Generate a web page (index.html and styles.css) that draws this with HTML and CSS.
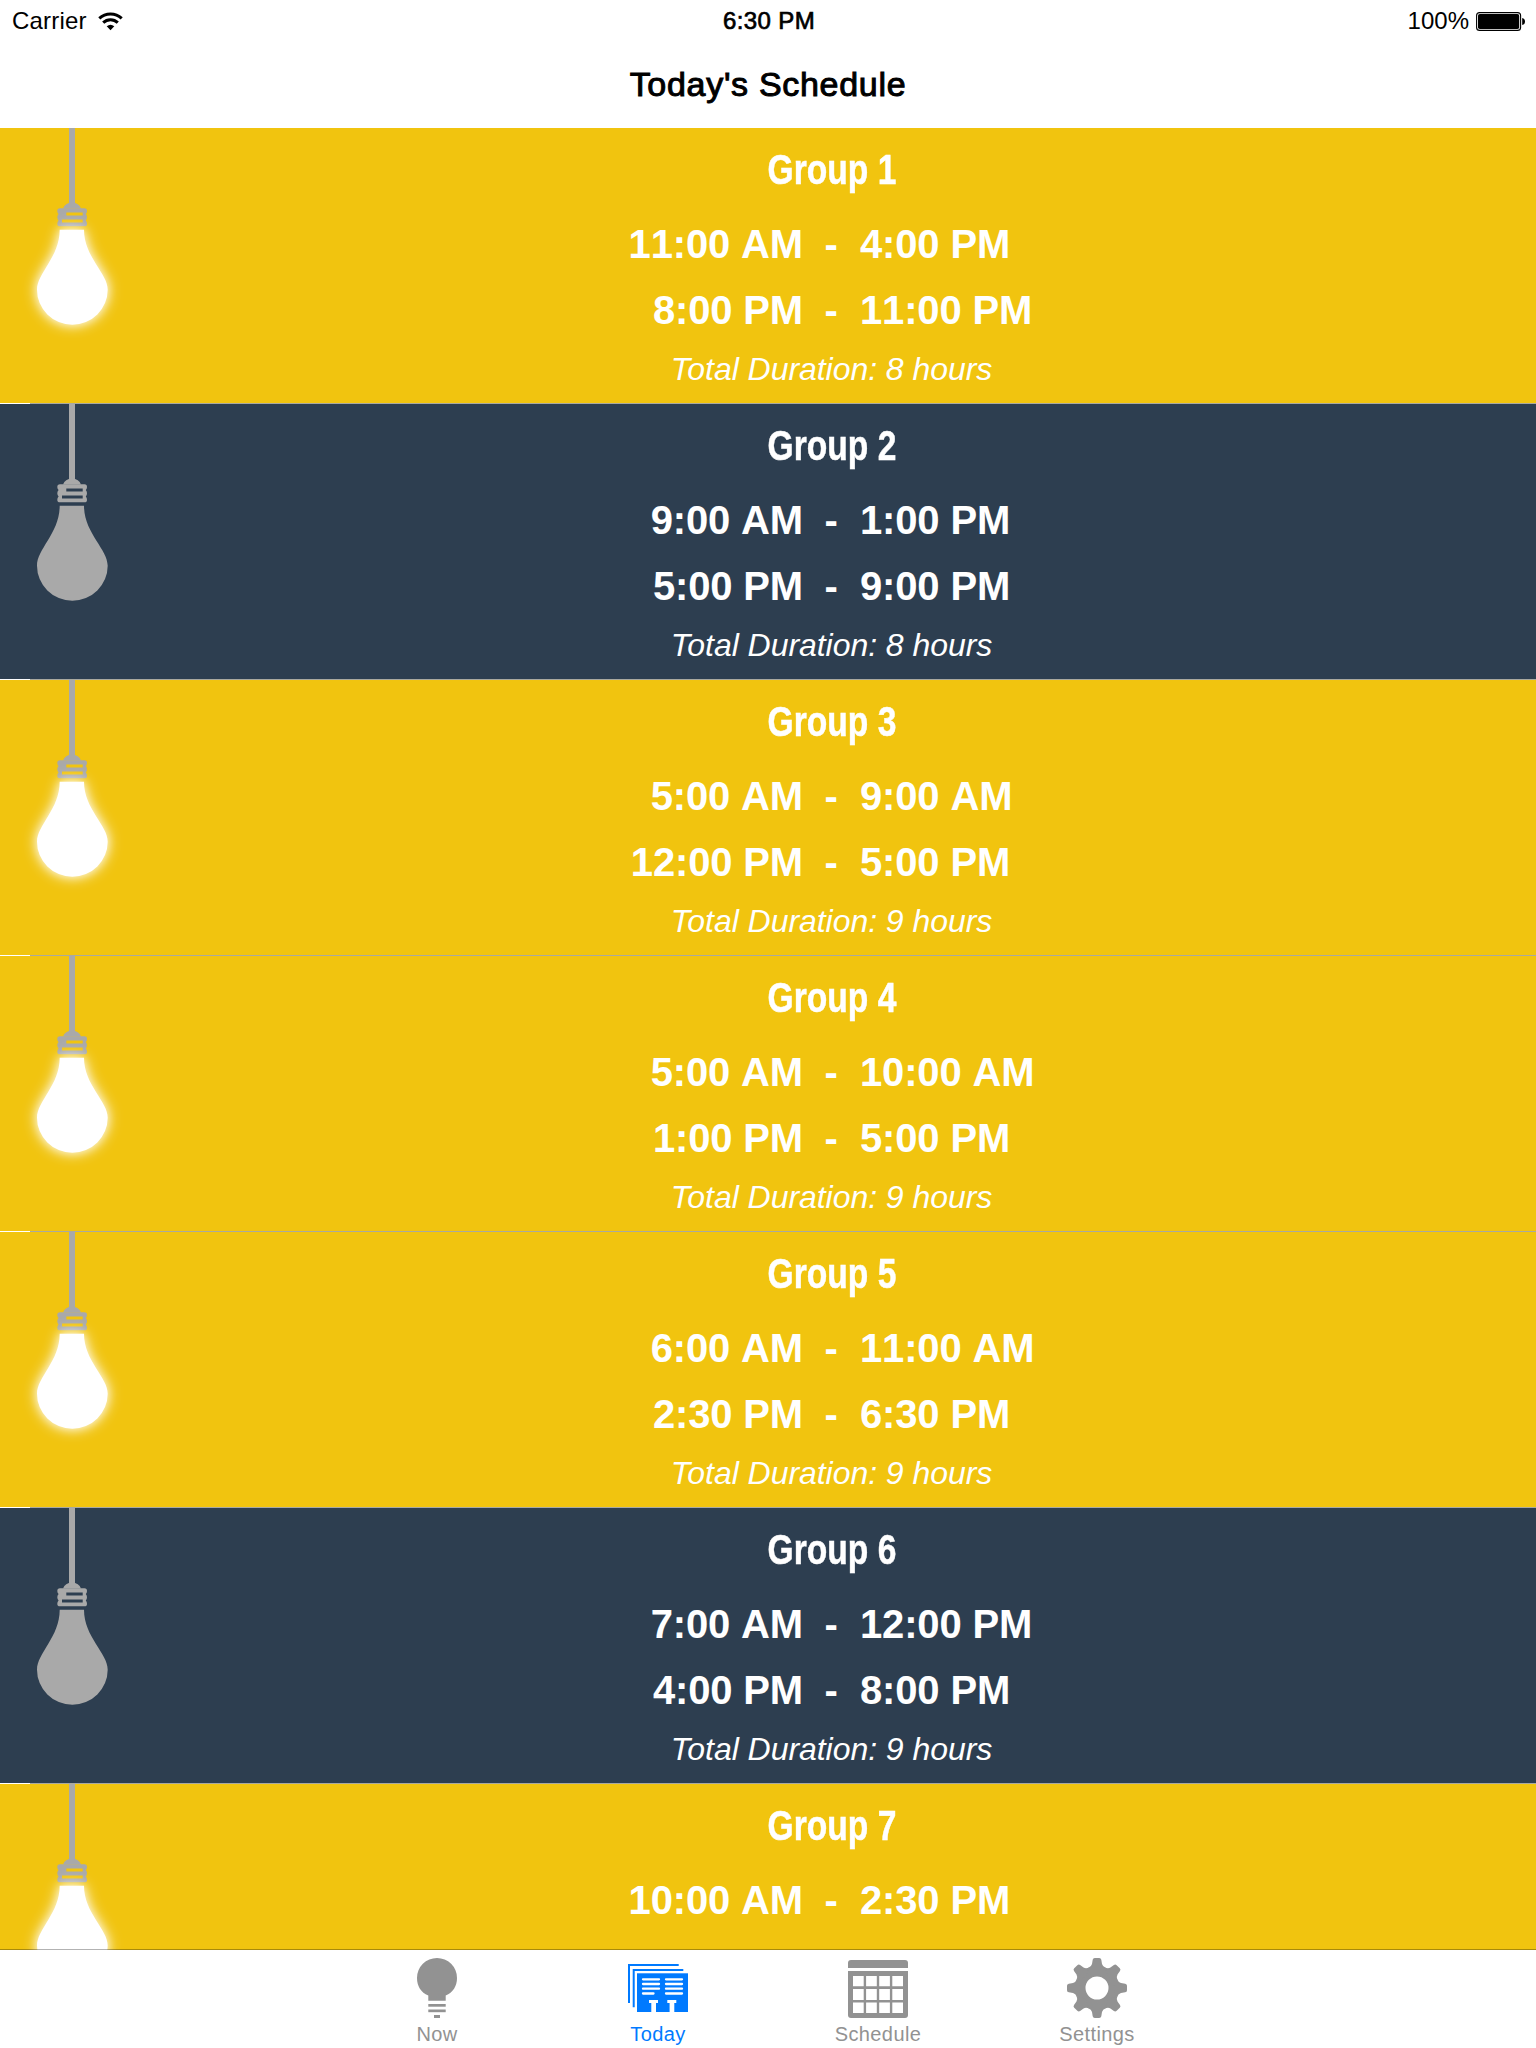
FILE: index.html
```html
<!DOCTYPE html>
<html lang="en">
  <head>
    <meta charset="utf-8" />
    <title>Today's Schedule</title>
    <meta name="viewport" content="width=device-width, initial-scale=1.0" />
    <link rel="stylesheet" href="styles.css">
  </head>
  <body>
    <!-- shared bulb drawing -->
    <svg class="defs" width="0" height="0">
      <g id="socket">
        <rect x="69" y="0" width="6" height="77" />
        <path d="M63 80.5 Q65 74.7 72 74.7 T81 80.5 Z" />
        <path
          fill-rule="evenodd"
          d="M60 80.3 H84.500 Q87 80.300 87 83 Q87 85 85.800 86 Q87 87.200 87 89.300 Q87 91.300 85.800 92.500 Q87 93.700 87 95.700 Q87 98.300 84.500 98.300 H60 Q57.300 98.300 57.300 95.700 Q57.300 93.700 58.600 92.500 Q57.300 91.300 57.300 89.300 Q57.300 87.200 58.600 86 Q57.300 85 57.300 83 Q57.300 80.300 60 80.300 Z M66.300 84.500 V87.500 H82.700 V84.500 Z M62 91.500 V94.500 H82.700 V91.500 Z"
        />
      </g>
      <path
        id="glass"
        d="M59.700 101.700 H84 C84 129 107.700 145 107.700 161.700 A35.350 35 0 0 1 37 161.700 C37 145 59.700 129 59.700 101.700 Z"
      />
    </svg>

    <header class="header">
      <div class="statusBar">
        <div class="statusLeft">
          <span>Carrier</span>
          <svg width="25" height="19" viewBox="0 0 25 19">
            <g fill="none" stroke="#000" stroke-width="3">
              <path d="M1.300 6.400 A16.200 16.200 0 0 1 23.700 6.400" />
              <path d="M5.200 10.700 A10.500 10.500 0 0 1 19.800 10.700" />
            </g>
            <path d="M8.700 14.300 Q12.500 11 16.300 14.300 L12.500 18.300 Z" />
          </svg>
        </div>
        <div class="statusTime">6:30 PM</div>
        <div class="statusRight">
          <span>100%</span>
          <svg width="50" height="19" viewBox="0 0 50 19">
            <rect x="0.600" y="0.600" width="44" height="17.800" rx="3" fill="none" stroke="#000" stroke-width="1.100" />
            <rect x="2" y="2" width="41.200" height="15" rx="1.800" />
            <path d="M46.200 6 Q49 6.500 49 9.500 T46.200 13 Z" />
          </svg>
        </div>
      </div>
      <h1 class="title">Today's Schedule</h1>
    </header>

    <main class="list">
      <section class="group on">
        <svg class="bulb"><use href="#socket" /><use class="glass" href="#glass" /></svg>
        <div class="info">
          <h2 class="name">Group 1</h2>
          <div class="times">
            <span>11:00 AM</span><span>-</span><span>4:00 PM</span>
            <span>8:00 PM</span><span>-</span><span>11:00 PM</span>
          </div>
          <p class="duration">Total Duration: 8 hours</p>
        </div>
      </section>
      <section class="group">
        <svg class="bulb"><use href="#socket" /><use class="glass" href="#glass" /></svg>
        <div class="info">
          <h2 class="name">Group 2</h2>
          <div class="times">
            <span>9:00 AM</span><span>-</span><span>1:00 PM</span>
            <span>5:00 PM</span><span>-</span><span>9:00 PM</span>
          </div>
          <p class="duration">Total Duration: 8 hours</p>
        </div>
      </section>
      <section class="group on">
        <svg class="bulb"><use href="#socket" /><use class="glass" href="#glass" /></svg>
        <div class="info">
          <h2 class="name">Group 3</h2>
          <div class="times">
            <span>5:00 AM</span><span>-</span><span>9:00 AM</span>
            <span>12:00 PM</span><span>-</span><span>5:00 PM</span>
          </div>
          <p class="duration">Total Duration: 9 hours</p>
        </div>
      </section>
      <section class="group on">
        <svg class="bulb"><use href="#socket" /><use class="glass" href="#glass" /></svg>
        <div class="info">
          <h2 class="name">Group 4</h2>
          <div class="times">
            <span>5:00 AM</span><span>-</span><span>10:00 AM</span>
            <span>1:00 PM</span><span>-</span><span>5:00 PM</span>
          </div>
          <p class="duration">Total Duration: 9 hours</p>
        </div>
      </section>
      <section class="group on">
        <svg class="bulb"><use href="#socket" /><use class="glass" href="#glass" /></svg>
        <div class="info">
          <h2 class="name">Group 5</h2>
          <div class="times">
            <span>6:00 AM</span><span>-</span><span>11:00 AM</span>
            <span>2:30 PM</span><span>-</span><span>6:30 PM</span>
          </div>
          <p class="duration">Total Duration: 9 hours</p>
        </div>
      </section>
      <section class="group">
        <svg class="bulb"><use href="#socket" /><use class="glass" href="#glass" /></svg>
        <div class="info">
          <h2 class="name">Group 6</h2>
          <div class="times">
            <span>7:00 AM</span><span>-</span><span>12:00 PM</span>
            <span>4:00 PM</span><span>-</span><span>8:00 PM</span>
          </div>
          <p class="duration">Total Duration: 9 hours</p>
        </div>
      </section>
      <section class="group on">
        <svg class="bulb"><use href="#socket" /><use class="glass" href="#glass" /></svg>
        <div class="info">
          <h2 class="name">Group 7</h2>
          <div class="times">
            <span>10:00 AM</span><span>-</span><span>2:30 PM</span>
          </div>
        </div>
      </section>
    </main>

    <nav class="tabBar">
      <a class="tab">
        <svg width="60" height="60" viewBox="0 0 60 60" fill="currentColor">
          <path d="M21.300 42.700 V37.500 C14 34.500 10 28 10 20 A20 20 0 0 1 50 20 C50 28 46 34.500 38.700 37.500 V42.700 Z" />
          <rect x="21.300" y="46" width="17.400" height="2.700" />
          <rect x="21.300" y="51.500" width="17.400" height="2.700" />
          <rect x="27" y="57" width="6" height="3" />
        </svg>
        <span>Now</span>
      </a>
      <a class="tab shifted active">
        <svg width="60" height="60" viewBox="0 0 60 60" fill="currentColor">
          <path d="M0 6 H50.700 V8 H2 V45 H0 Z" />
          <path d="M4.700 11 H55.300 V13 H6.700 V49.300 H4.700 Z" />
          <rect x="9" y="15.300" width="51" height="38.700" />
          <g stroke="#fff" stroke-width="2.300" stroke-linecap="round">
            <path d="M15 21.300 H31 M15 26 H31 M15 30.700 H31 M15 35.500 H25.500" />
            <path d="M38 21.300 H54 M38 26 H54 M38 30.700 H54 M38 35.500 H54" />
          </g>
          <g fill="#fff">
            <path d="M21 42 H30 V45 H28 V54 H23.300 V45 H21 Z" />
            <path d="M39.300 42 H48.300 V45 H46.300 V54 H41.600 V45 H39.300 Z" />
          </g>
        </svg>
        <span>Today</span>
      </a>
      <a class="tab shifted">
        <svg width="60" height="60" viewBox="0 0 60 60" fill="currentColor">
          <path d="M0 10 V5 Q0 2 3 2 H57 Q60 2 60 5 V10 Z" />
          <path d="M0 13 H60 V57 Q60 60 57 60 H3 Q0 60 0 57 Z" />
          <g fill="#fff">
            <path d="M5 18 h10.700 v10.300 h-10.700z M18.100 18 h10.700 v10.300 h-10.700z M31.200 18 h10.700 v10.300 h-10.700z M44.300 18 h10.700 v10.300 h-10.700z" />
            <path d="M5 31 h10.700 v11 h-10.700z M18.100 31 h10.700 v11 h-10.700z M31.200 31 h10.700 v11 h-10.700z M44.300 31 h10.700 v11 h-10.700z" />
            <path d="M5 44.500 h10.700 v10.500 h-10.700z M18.100 44.500 h10.700 v10.500 h-10.700z M31.200 44.500 h10.700 v10.500 h-10.700z M44.300 44.500 h10.700 v10.500 h-10.700z" />
          </g>
        </svg>
        <span>Schedule</span>
      </a>
      <a class="tab">
        <svg width="60" height="60" viewBox="0 0 60 60" fill="currentColor">
          <defs>
            <path id="tooth" d="M25.700 1.800 Q26 0 27.800 0 H32.200 Q34 0 34.300 1.800 L35 6 Q35.500 8.500 39 10 L30 14 L21 10 Q24.500 8.500 25 6 Z" />
          </defs>
          <circle cx="30" cy="30" r="16.500" fill="none" stroke="currentColor" stroke-width="10" />
          <use href="#tooth" />
          <use href="#tooth" transform="rotate(45 30 30)" />
          <use href="#tooth" transform="rotate(90 30 30)" />
          <use href="#tooth" transform="rotate(135 30 30)" />
          <use href="#tooth" transform="rotate(180 30 30)" />
          <use href="#tooth" transform="rotate(225 30 30)" />
          <use href="#tooth" transform="rotate(270 30 30)" />
          <use href="#tooth" transform="rotate(315 30 30)" />
        </svg>
        <span>Settings</span>
      </a>
    </nav>
  </body>
</html>
```
FILE: styles.css
```css
* {
  box-sizing: border-box;
}
body {
  margin: 0;
  width: 1536px;
  height: 2048px;
  overflow: hidden;
  display: flex;
  flex-direction: column;
  background: #fff;
  font-family: "Liberation Sans", Arial, Helvetica, sans-serif;
  color: #000;
}
.defs {
  position: absolute;
}
.header {
  height: 128px;
  flex: none;
}
.statusBar {
  display: grid;
  grid-template-columns: 1fr auto 1fr;
  align-items: center;
  height: 42px;
  padding: 0 10px 0 12px;
  font-size: 24px;
  line-height: 42px;
}
.statusLeft,
.statusRight {
  display: flex;
  align-items: center;
}
.statusLeft {
  gap: 11px;
  letter-spacing: 0.2px;
}
.statusRight {
  justify-content: flex-end;
  gap: 7px;
}
.statusTime {
  -webkit-text-stroke: 0.7px #000;
  letter-spacing: 0.4px;
}
.title {
  margin: 0;
  text-align: center;
  font-size: 34px;
  font-weight: normal;
  line-height: 84px;
  letter-spacing: 0.7px;
  -webkit-text-stroke: 1px #000;
}
.list {
  flex: 1;
  min-height: 0;
  overflow: hidden;
  margin-bottom: -1px;
}
.group {
  display: flex;
  height: 276px;
  background: #2d3e50;
  color: #fff;
  /* separator line, inset 30px from the left */
  background-image: linear-gradient(to right, #fff 30px, #a9a9a0 30px);
  background-size: 100% 1px;
  background-position: bottom;
  background-repeat: no-repeat;
}
.group.on {
  background-color: #f1c40f;
}
.bulb {
  width: 144px;
  height: 230px;
  flex: none;
  fill: #a9a9a9;
}
.on .glass {
  fill: #fff;
  filter: drop-shadow(0 0 4px rgba(255, 255, 255, 0.5))
    drop-shadow(0 0 7px rgba(255, 255, 255, 0.85));
}
.info {
  flex: 1;
  padding-top: 12px;
  /* text is centered at 832px */
  margin-right: 16px;
}
.name {
  margin: 0 0 11px;
  text-align: center;
  font-size: 42px;
  line-height: 60px;
  transform: scaleX(0.8);
  -webkit-text-stroke: 0.5px #fff;
}
.times {
  display: grid;
  grid-template-columns: 1fr 57px 1fr;
  margin-right: 1px;
  font-size: 40px;
  font-weight: bold;
  line-height: 66px;
  letter-spacing: -0.15px;
  font-kerning: none;
}
.times span:nth-child(3n + 1) {
  text-align: right;
}
.times span:nth-child(3n + 2) {
  text-align: center;
  padding-right: 1px;
}
.duration {
  margin: 0 1px 0 0;
  text-align: center;
  font-size: 32px;
  font-style: italic;
  line-height: 52px;
  letter-spacing: -0.05px;
}
.tabBar {
  flex: none;
  display: flex;
  justify-content: center;
  height: 99px;
  padding: 8px 2px 0 0;
  background: #fff;
  background-clip: padding-box;
  border-top: 1px solid rgba(0, 0, 0, 0.3);
  color: #929292;
  z-index: 1;
}
.tab {
  display: flex;
  flex-direction: column;
  align-items: center;
  width: 220px;
  font-size: 20px;
  line-height: 32px;
  letter-spacing: 0.4px;
}
.tab svg {
  flex: none;
}
.tab.shifted {
  padding-left: 2px;
}
.tab.active {
  color: #007aff;
}
```
